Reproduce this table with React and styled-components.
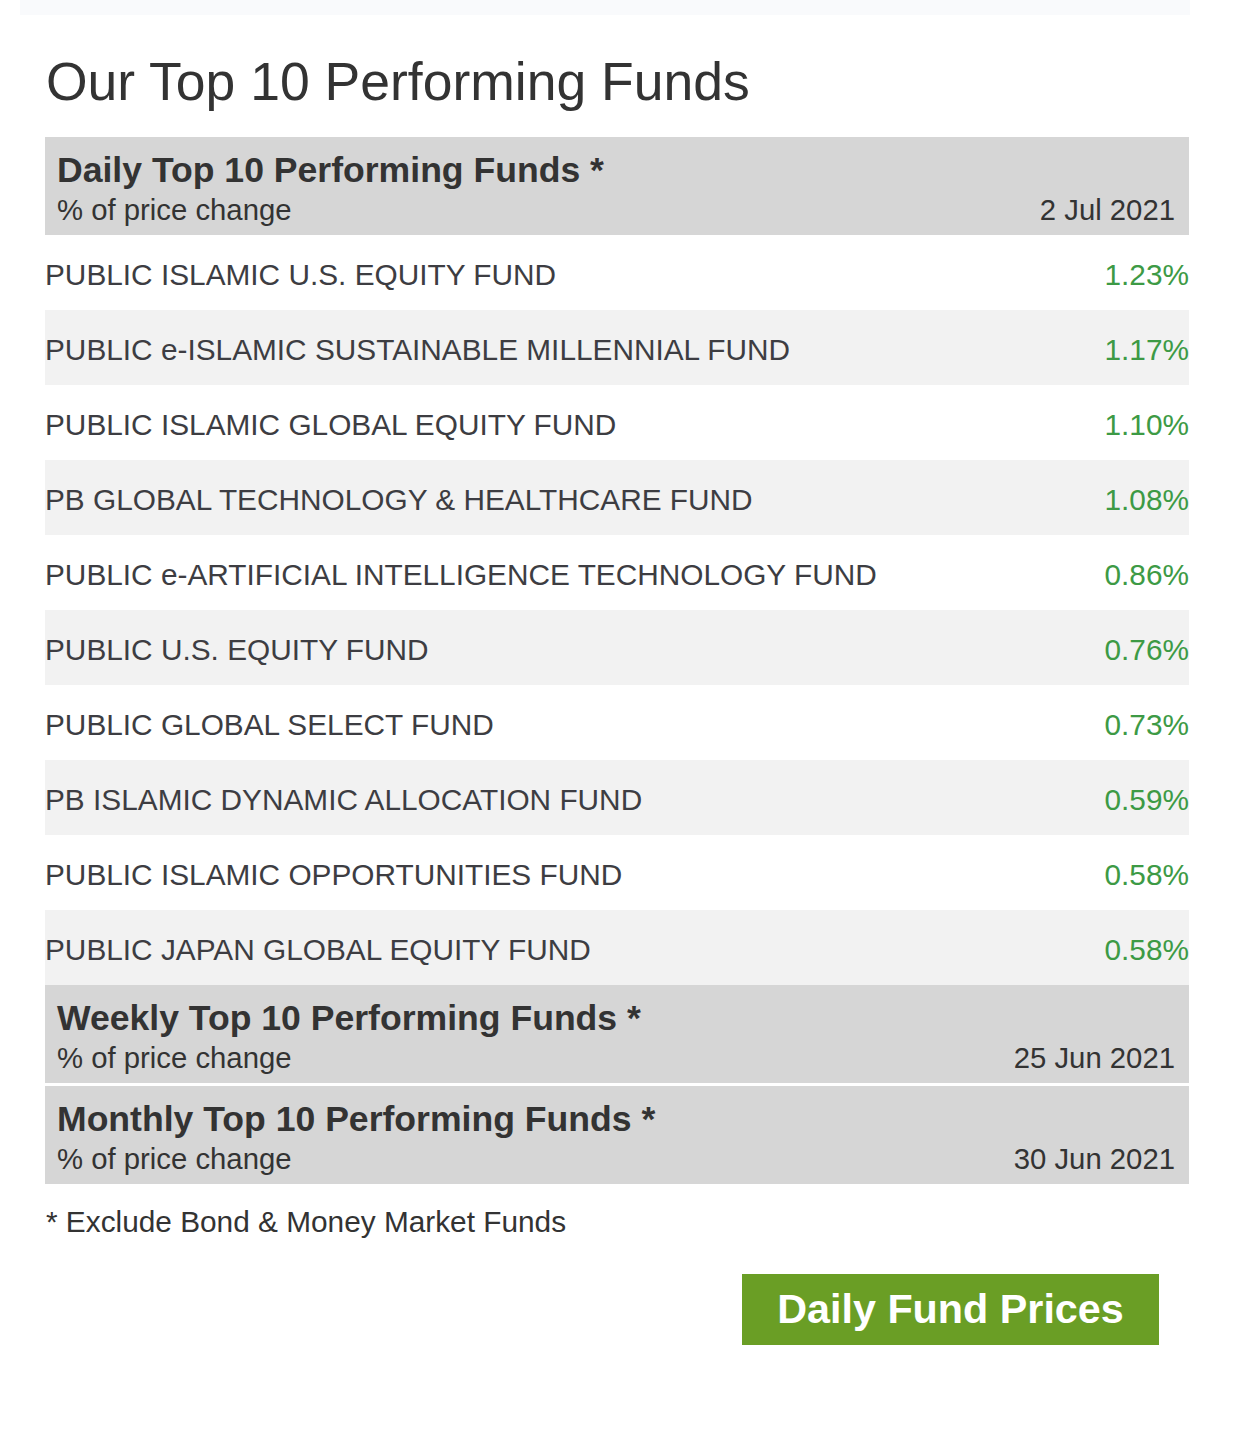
import React from 'react';
import styled, { createGlobalStyle } from 'styled-components';

const GlobalStyle = createGlobalStyle`
    body {
        margin: 0;
        background: #ffffff;
        font-family: "Liberation Sans", Arial, sans-serif;
        color: #333333;
    }
`

const Page = styled.div`
    width: 1234px;
    height: 1440px;
    background: #ffffff;
    display: flex;
    flex-direction: column;
`
const TopStrip = styled.div`
    height: 15px;
    margin: 0 44px 0 20px;
    background: #f9fafc;
`
const Section = styled.section`
    width: 1144px;
    margin-left: 45px;
    display: flex;
    flex-direction: column;
`
const Title = styled.h1`
    margin: 40px 0 29px 1px;
    font-size: 53.5px;
    line-height: 53px;
    font-weight: 400;
    color: #333333;
`
const Header = styled.div`
    height: 98px;
    box-sizing: border-box;
    background: #d6d6d6;
    padding: 16px 14px 0 12px;
    margin-top: ${({ $gap }) => $gap || 0}px;
    display: flex;
    flex-direction: column;
    gap: 7px;
`
const HeaderTitle = styled.div`
    font-size: 35.6px;
    line-height: 35px;
    font-weight: 700;
    color: #333333;
`
const HeaderSub = styled.div`
    display: flex;
    justify-content: space-between;
    font-size: 29.3px;
    line-height: 30px;
    color: #333333;
`
const Row = styled.div`
    height: 75px;
    box-sizing: border-box;
    padding-top: 5px;
    display: flex;
    align-items: center;
    justify-content: space-between;
    background: ${({ $shade }) => ($shade ? '#f2f2f2' : '#ffffff')};
    font-size: 29.8px;
    line-height: 30px;
`
const FundName = styled.span`
    color: #3d3d42;
`
const Change = styled.span`
    color: #3d9a45;
`
const Note = styled.p`
    margin: 23px 0 0 1px;
    font-size: 29.8px;
    line-height: 30px;
    color: #333333;
`
const PricesButton = styled.button`
    align-self: flex-end;
    margin: 37px 30px 0 0;
    width: 417px;
    height: 71px;
    border: none;
    border-radius: 0;
    background: #6a9e25;
    color: #ffffff;
    font-family: "Liberation Sans", Arial, sans-serif;
    font-size: 41.3px;
    font-weight: 700;
    cursor: pointer;
`

const funds = [
    ['PUBLIC ISLAMIC U.S. EQUITY FUND', '1.23%'],
    ['PUBLIC e-ISLAMIC SUSTAINABLE MILLENNIAL FUND', '1.17%'],
    ['PUBLIC ISLAMIC GLOBAL EQUITY FUND', '1.10%'],
    ['PB GLOBAL TECHNOLOGY & HEALTHCARE FUND', '1.08%'],
    ['PUBLIC e-ARTIFICIAL INTELLIGENCE TECHNOLOGY FUND', '0.86%'],
    ['PUBLIC U.S. EQUITY FUND', '0.76%'],
    ['PUBLIC GLOBAL SELECT FUND', '0.73%'],
    ['PB ISLAMIC DYNAMIC ALLOCATION FUND', '0.59%'],
    ['PUBLIC ISLAMIC OPPORTUNITIES FUND', '0.58%'],
    ['PUBLIC JAPAN GLOBAL EQUITY FUND', '0.58%'],
];

function PeriodHeader({ title, date, gap }) {
    return (
        <Header $gap={gap}>
            <HeaderTitle>{title}</HeaderTitle>
            <HeaderSub>
                <span>% of price change</span>
                <span>{date}</span>
            </HeaderSub>
        </Header>
    );
}

function App() {
    return (
        <>
            <GlobalStyle />
            <Page>
                <TopStrip />
                <Section>
                    <Title>Our Top 10 Performing Funds</Title>
                    <PeriodHeader title="Daily Top 10 Performing Funds *" date="2 Jul 2021" />
                    {funds.map(([name, pct], i) => (
                        <Row key={name} $shade={i % 2 === 1}>
                            <FundName>{name}</FundName>
                            <Change>{pct}</Change>
                        </Row>
                    ))}
                    <PeriodHeader title="Weekly Top 10 Performing Funds *" date="25 Jun 2021" />
                    <PeriodHeader title="Monthly Top 10 Performing Funds *" date="30 Jun 2021" gap={3} />
                    <Note>* Exclude Bond &amp; Money Market Funds</Note>
                    <PricesButton>Daily Fund Prices</PricesButton>
                </Section>
            </Page>
        </>
    );
}

export default App;
